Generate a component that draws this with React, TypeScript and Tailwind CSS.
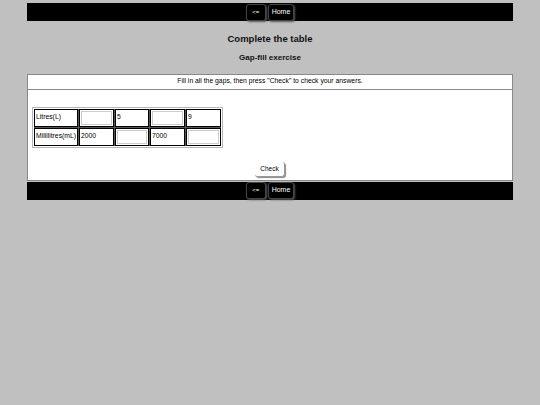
import React from "react"

const font = { fontFamily: '"Liberation Sans", Arial, sans-serif' }

function NavBar() {
	return (
		<div className="h-[18px] bg-black flex justify-center items-center gap-[2px]">
			<button className="h-[17px] w-[20px] rounded-[3px] border border-[#444] bg-black text-white text-[6px] shadow-[1px_1px_2px_#555]">
				&lt;=
			</button>
			<button className="h-[17px] px-[3px] rounded-[3px] border border-[#444] bg-black text-white text-[7px] shadow-[1px_1px_2px_#555]">
				Home
			</button>
		</div>
	)
}

function Field() {
	return <div className="h-[14px] w-[32px] border border-[#ccc] bg-white" />
}

function Cell({ children }: { children?: React.ReactNode }) {
	return (
		<div className="h-[18px] border border-black bg-white flex items-center px-[1px] text-[6.8px] text-black whitespace-nowrap overflow-hidden">
			{children}
		</div>
	)
}

export default function App() {
	return (
		<div className="min-h-[405px] bg-[#c0c0c0] pt-[3px]" style={font}>
			<div className="mx-[27px]">
				<NavBar />
				<h1 className="text-center font-bold text-[9.5px] text-[#111] mt-[13px] leading-none">Complete the table</h1>
				<h2 className="text-center font-bold text-[8px] text-[#111] mt-[10px] leading-none">Gap-fill exercise</h2>
				<div className="mt-[12px] h-[16px] bg-white border border-[#888] flex items-center justify-center text-[6.8px] text-black">
					Fill in all the gaps, then press "Check" to check your answers.
				</div>
				<div className="h-[91px] bg-white border border-t-0 border-[#888] relative">
					<div className="absolute left-[4px] top-[17px] border border-[#b5b5b5] p-[1px]">
						<div className="grid grid-cols-[44px_35px_34px_35px_35px] gap-[1px] bg-[#555]">
							<Cell>Litres(L)</Cell>
							<Cell>
								<Field />
							</Cell>
							<Cell>5</Cell>
							<Cell>
								<Field />
							</Cell>
							<Cell>9</Cell>
							<Cell>Millilitres(mL)</Cell>
							<Cell>2000</Cell>
							<Cell>
								<Field />
							</Cell>
							<Cell>7000</Cell>
							<Cell>
								<Field />
							</Cell>
						</div>
					</div>
					<div className="absolute left-0 right-0 top-[72px] flex justify-center">
						<button className="h-[15px] w-[30px] rounded-[3px] bg-white text-[6.5px] text-black shadow-[1px_1px_1px_#888] border-r border-b border-[#999]">
							Check
						</button>
					</div>
				</div>
				<div className="mt-[1px]">
					<NavBar />
				</div>
			</div>
		</div>
	)
}
